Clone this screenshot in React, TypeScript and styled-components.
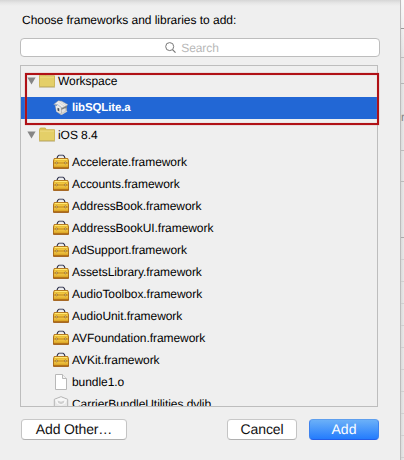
import React from "react";
import styled, { createGlobalStyle } from "styled-components";

const Global = createGlobalStyle`
  * { box-sizing: border-box; }
  body {
    margin: 0;
    overflow: hidden;
    background: #efefef;
    font-family: "Liberation Sans", Arial, sans-serif;
    font-size: 12px;
    text-rendering: geometricPrecision;
    color: #000;
  }
`;

const Screen = styled.div`
  display: flex;
  width: 404px;
  height: 460px;
  overflow: hidden;
`;

const Sheet = styled.main`
  width: 400px;
  height: 460px;
  flex: none;
  padding: 13px 22px 0 20px;
  background: linear-gradient(#d6d6d6 0, #e6e6e6 3px, #efefef 6px);
`;

const Heading = styled.div`
  height: 25px;
  padding-left: 2px;
  line-height: 15px;
  letter-spacing: -0.03px;
  white-space: nowrap;
`;

const SearchField = styled.div`
  display: flex;
  align-items: center;
  justify-content: center;
  width: 360px;
  height: 19px;
  gap: 5px;
  padding-top: 1px;
  padding-right: 16px;
  border: 1px solid #bdbdbd;
  border-radius: 4px;
  background: #fff;
  color: #b8b8b8;
  letter-spacing: -0.1px;
`;

const List = styled.div`
  position: relative;
  width: 358px;
  height: 342px;
  margin-top: 8px;
  border: 1px solid #bdbdbd;
`;

const Rows = styled.div`
  height: 340px;
  padding-top: 4px;
  overflow: hidden;
`;

const Row = styled.div<{ $group?: boolean; $selected?: boolean }>`
  display: flex;
  align-items: center;
  height: ${(p) => (p.$group ? 27 : 22)}px;
  padding-left: ${(p) => (p.$group ? 6 : 32)}px;
  padding-bottom: ${(p) => (p.$group ? 5 : 0)}px;
  background: ${(p) => (p.$selected ? "#2267d5" : "transparent")};
  color: ${(p) => (p.$selected ? "#fff" : "#000")};
  font-size: ${(p) => (p.$selected ? 11.5 : 12)}px;
  font-weight: ${(p) => (p.$selected ? 700 : 400)};
`;

const SecondGroup = styled.div`
  padding-top: 5px;
`;

const Label = styled.span<{ $track?: number }>`
  margin-left: 3px;
  line-height: 14px;
  letter-spacing: ${(p) => p.$track ?? -0.06}px;
  white-space: nowrap;
`;

const Highlight = styled.div`
  position: absolute;
  top: 7px;
  left: 4px;
  width: 354px;
  height: 52px;
  border: 2px solid #b01116;
  box-shadow: 0 0 1px #c98284, inset 0 0 1px #c98284;
`;

const Actions = styled.div`
  display: flex;
  width: 358px;
  margin-top: 12px;
  padding-left: 1px;
`;

const Button = styled.button<{ $width: number; $primary?: boolean; $push?: boolean; $track: number }>`
  width: ${(p) => p.$width}px;
  height: 21px;
  flex: none;
  margin: 0 0 0 ${(p) => (p.$push ? "100px" : p.$primary ? "12px" : "0")};
  padding: 0;
  border: 1px solid;
  border-color: ${(p) => (p.$primary ? "#5e9fee #3f83ee #245ee8" : "#c8c8c8 #c4c4c4 #b0b0b0")};
  border-radius: 4px;
  background: ${(p) => (p.$primary ? "linear-gradient(#6bb0f8, #247cfd)" : "#fff")};
  color: ${(p) => (p.$primary ? "#fff" : "#111")};
  font: 14px/19px "Liberation Sans", Arial, sans-serif;
  text-rendering: geometricPrecision;
  letter-spacing: ${(p) => p.$track}px;
`;

const Backdrop = styled.aside`
  width: 4px;
  border-left: 1px solid #bcbcbc;
  background:
    linear-gradient(rgba(255, 255, 255, 0.8), rgba(255, 255, 255, 0) 60px),
    linear-gradient(90deg, #dadada, #e9e9e9);
`;

const Segment = styled.div<{ $height: number; $tone: string }>`
  height: ${(p) => p.$height}px;
  overflow: hidden;
  border-bottom: 1px solid ${(p) => p.$tone};
  color: #858585;
  line-height: 66px;
`;

const Icon = styled.svg`
  display: block;
  flex: none;
`;

const Disclosure = () => (
  <Icon width="12" height="16" viewBox="0 0 12 16">
    <path d="M.4 4.5h8.2L4.5 11.5z" fill="#858585" />
  </Icon>
);

const Folder = () => (
  <Icon width="16" height="16" viewBox="0 0 16 16">
    <path d="M.5 2.5 1.3 1h5l1 1.7h8.2v11H.5z" fill="#dbc35b" stroke="#c9ae45" strokeWidth=".8" />
    <path d="M1 4h14v9H1z" fill="#e4cf68" />
    <path d="M1 4h14" stroke="#efdd85" />
    <path d="M0 14.2h16" stroke="#b5aa7d" strokeWidth=".7" />
  </Icon>
);

const Toolbox = () => (
  <Icon width="16" height="16" viewBox="0 0 16 16">
    <path d="M4 4.2 4.7 2.4 6 1.2h4l1.3 1.2.7 1.8" fill="none" stroke="#2c2f48" strokeWidth="1.1" />
    <path d="M6.2 1.6h3.6" stroke="#8a8ea0" strokeWidth=".7" />
    <path d="M1.2 4.5h13.6l.7 2.5v7.3H.5V7z" fill="#deaa2a" stroke="#a8660f" strokeWidth=".9" />
    <path d="M1.6 5.5h12.8" stroke="#ffe873" strokeWidth="1.2" />
    <path d="M1 6.4h14v2H1z" fill="#f0c63f" />
    <path d="M1 9h14" stroke="#bd8420" strokeWidth=".6" />
    <path d="M1 9.8h14v1.8H1z" fill="#edc040" />
    <path d="M.4 14h15.2" stroke="#944a0c" />
    <circle cx="3.6" cy="8.9" r="1" fill="#e8d08a" stroke="#8f6020" strokeWidth=".6" />
    <circle cx="12.4" cy="8.9" r="1" fill="#e8d08a" stroke="#8f6020" strokeWidth=".6" />
  </Icon>
);

const Archive = () => (
  <Icon width="16" height="16" viewBox="0 0 16 16">
    <path d="m1.8 5 1.5 6.7L8 15l5.8-3.8V4.6L8 7.5z" fill="#b4b5b4" />
    <path d="m8.5 7.5 5.3-2.7v3.4L8.5 10z" fill="#7d8081" />
    <path d="M.7 4.5 5.3.8l3.4.4L15 4.7 9 7.9 4.8 4.8z" fill="#eeeeec" stroke="#a2a2a0" strokeWidth=".5" />
    <path d="m6.9 1.2 6.4 4.2M5.5 2.2l6 4.2" stroke="#c7c7c5" strokeWidth=".6" />
    <path d="m2.8 6.2 2-1.4 3 2.8v6l-4.2-2.2z" fill="#ecece9" />
    <path d="m4.5 7.7 1.8.7v3l-1.8-.9z" fill="#4b4f53" />
    <path d="M8.8 9.8 12.5 8v3L9 13z" fill="#e2e2e0" />
    <path d="m8 13.5 5.3-3 1.2 1L8.6 15z" fill="#cfcfcc" />
  </Icon>
);

const Document = () => (
  <Icon width="16" height="16" viewBox="0 0 16 16">
    <path d="M2.5.5h7l4 4v11h-11z" fill="#fff" stroke="#b8b8b8" />
    <path d="M9.5.5v4h4" fill="#f2f2f2" stroke="#b8b8b8" />
  </Icon>
);

const Library = () => (
  <Icon width="16" height="16" viewBox="0 0 16 16">
    <path d="m8 .7 6.7 2.6v8.4L8 15.3l-6.7-3.6V3.3z" fill="#e8e8e8" stroke="#b5b5b5" />
    <path d="M2 3.8 8 1.5l6 2.3-2 4-4 1.6-4-1.6z" fill="#f7f7f7" />
    <path d="m4.5 4.5 3.5 1.2 3.5-1.2L10.7 7 8 8.3 5.3 7z" fill="#cfcfcf" />
  </Icon>
);

const frameworks = [
  "Accelerate.framework",
  "Accounts.framework",
  "AddressBook.framework",
  "AddressBookUI.framework",
  "AdSupport.framework",
  "AssetsLibrary.framework",
  "AudioToolbox.framework",
  "AudioUnit.framework",
  "AVFoundation.framework",
  "AVKit.framework",
];

const segments: [number, string][] = [
  [29, "#999"], [29, "#bbb"], [26, "#b5b5b5"], [67, "#bbb"], [31, "#bbb"], [56, "#aaa"],
  ...Array.from({ length: 10 }, (): [number, string] => [22, "#d0d0d0"]),
];

export default function App() {
  return (
    <>
      <Global />
      <Screen>
        <Sheet>
          <Heading>Choose frameworks and libraries to add:</Heading>
          <SearchField>
            <Icon width="11" height="12" viewBox="0 0 11 12">
              <circle cx="4.7" cy="4.6" r="4" fill="none" stroke="#777" />
              <path d="m7.5 7.6 3 3" stroke="#777" strokeWidth="1.2" />
            </Icon>
            Search
          </SearchField>
          <List>
            <Rows>
              <Row $group><Disclosure /><Folder /><Label>Workspace</Label></Row>
              <Row $selected><Archive /><Label $track={-0.15}>libSQLite.a</Label></Row>
              <SecondGroup>
                <Row $group><Disclosure /><Folder /><Label>iOS 8.4</Label></Row>
                {frameworks.map((name) => (
                  <Row key={name}><Toolbox /><Label>{name}</Label></Row>
                ))}
                <Row><Document /><Label>bundle1.o</Label></Row>
                <Row><Library /><Label>CarrierBundleUtilities.dylib</Label></Row>
              </SecondGroup>
            </Rows>
            <Highlight />
          </List>
          <Actions>
            <Button $width={106} $track={-0.15}>Add Other…</Button>
            <Button $width={70} $push $track={-0.1}>Cancel</Button>
            <Button $width={70} $primary $track={0}>Add</Button>
          </Actions>
        </Sheet>
        <Backdrop>
          {segments.map(([height, tone], i) => (
            <Segment key={i} $height={height} $tone={tone}>{i === 3 ? "r" : null}</Segment>
          ))}
        </Backdrop>
      </Screen>
    </>
  );
}
